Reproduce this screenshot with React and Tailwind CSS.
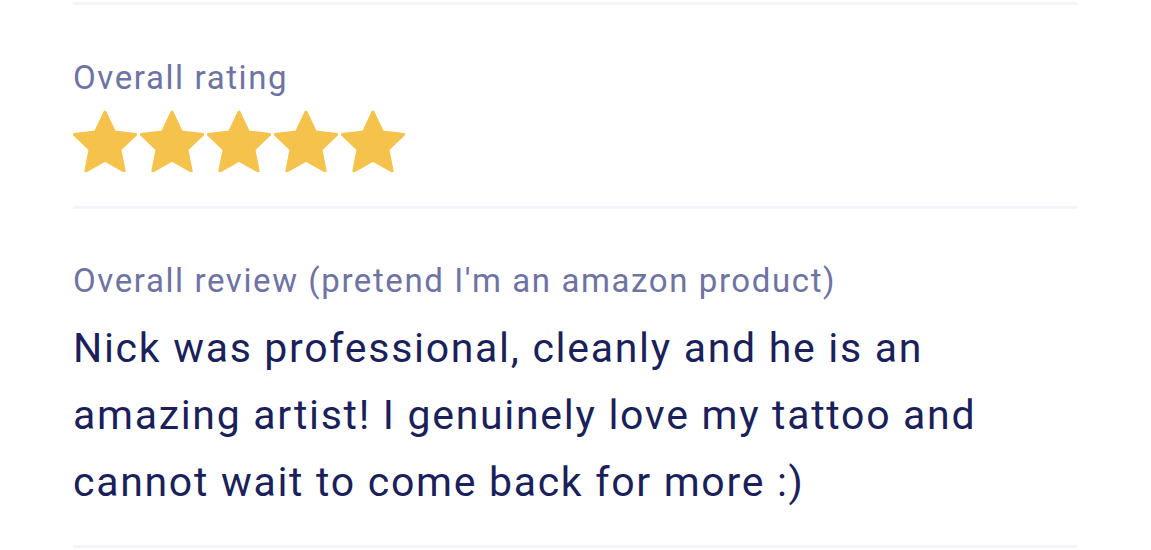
const Star = () => (
  <svg viewBox="2 2 20 19" preserveAspectRatio="none" className="w-[64px] h-[62px]">
    <path
      d="M12 2.6l2.95 6.1 6.65.8-4.9 4.6 1.3 6.6L12 17.4l-6 3.3 1.3-6.6-4.9-4.6 6.65-.8z"
      fill="#f5c24c"
      stroke="#f5c24c"
      strokeWidth="0.9"
      strokeLinejoin="round"
    />
  </svg>
);

export default function App() {
  return (
    <div className="w-[1151px] h-[550px] bg-white overflow-hidden font-['Roboto',sans-serif]">
      <div className="mx-[73px] w-[1004px]">
        <div className="h-[3px] mt-[2px] bg-[#f4f4fa]" />
        <div className="pt-[53px] pb-[34px]">
          <p className="text-[33px] leading-[40px] tracking-[1.6px] text-[#6f73a3]">Overall rating</p>
          <div className="flex gap-[3px] mt-[12px]">
            <Star />
            <Star />
            <Star />
            <Star />
            <Star />
          </div>
        </div>
        <div className="h-[3px] bg-[#f4f4fa]" />
        <div className="pt-[52px] pb-[29px]">
          <p className="text-[33px] leading-[40px] tracking-[1.6px] text-[#6f73a3]">
            Overall review (pretend I'm an amazon product)
          </p>
          <p className="mt-[14px] text-[41px] leading-[67px] tracking-[1.7px] text-[#1b1f5a] w-[940px]">
            Nick was professional, cleanly and he is an amazing artist! I genuinely love my tattoo and
            cannot wait to come back for more :)
          </p>
        </div>
        <div className="h-[3px] bg-[#f4f4fa]" />
      </div>
    </div>
  );
}
